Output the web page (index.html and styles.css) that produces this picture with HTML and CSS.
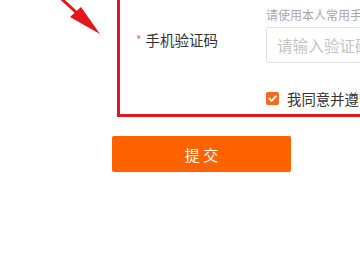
FILE: index.html
```html
<!DOCTYPE html>
<html lang="zh-CN">
<head>
<meta charset="utf-8">
<title>提交</title>
<link rel="stylesheet" href="styles.css">
</head>
<body>
<div class="page">
  <div class="frame">
    <div class="row">
      <div class="label"><span class="req">*</span>手机验证码</div>
      <div class="field">
        <div class="hint">请使用本人常用手机号码</div>
        <div class="input"><span class="placeholder">请输入验证码</span></div>
        <div class="agree">
          <span class="check"><svg viewBox="0 0 13 13" width="13" height="13"><path d="M3.3 6.6 L5.6 8.8 L9.8 4.4" fill="none" stroke="#fff" stroke-width="1.9" stroke-linecap="round" stroke-linejoin="round"/></svg></span>
          <span class="agree-text">我同意并遵守相关协议</span>
        </div>
      </div>
    </div>
  </div>
  <button class="submit" type="button">提 交</button>
  <svg class="arrow" viewBox="0 0 120 50" width="120" height="50">
    <line x1="54" y1="-8" x2="77" y2="13" stroke="#e8141b" stroke-width="3"/>
    <polygon points="100,34 70,17 81,7" fill="#e8141b"/>
  </svg>
</div>
</body>
</html>
```
FILE: styles.css
```css
html, body {
  margin: 0;
  padding: 0;
  background: #fff;
  overflow: hidden;
}
body {
  width: 360px;
  height: 270px;
  font-family: "Noto Sans CJK SC", "Noto Sans", sans-serif;
  color: #333;
}
.page {
  position: relative;
  display: flow-root;
  width: 360px;
  height: 270px;
  overflow: hidden;
}
.frame {
  margin: -20px 0 0 117px;
  width: 420px;
  border: 3px solid #dc1a1f;
  padding: 23px 0 5px 0;
  box-sizing: content-box;
}
.row {
  display: flex;
}
.label {
  width: 130px;
  padding-left: 16px;
  margin-top: 24px;
  font-size: 14.5px;
  line-height: 20px;
  color: #333;
  white-space: nowrap;
}
.req {
  color: #ee6b6b;
  margin-right: 4px;
  font-size: 12px;
  position: relative;
  top: -1px;
}
.field {
  display: flex;
  flex-direction: column;
}
.hint {
  font-size: 12px;
  line-height: 18px;
  color: #a8a8a8;
  white-space: nowrap;
}
.input {
  margin-top: 3px;
  width: 220px;
  height: 34px;
  border: 1px solid #e3e3e3;
  border-radius: 2px;
  display: flex;
  align-items: center;
  padding-left: 10px;
}
.placeholder {
  font-size: 15.6px;
  color: #c4c4c4;
  white-space: nowrap;
}
.agree {
  margin-top: 26px;
  height: 20px;
  display: flex;
  align-items: center;
}
.check {
  width: 13px;
  height: 13px;
  background: #f56a1e;
  border-radius: 2px;
  display: flex;
  margin-top: -2px;
}
.agree-text {
  margin-left: 8px;
  font-size: 14.4px;
  line-height: 20px;
  color: #333;
  white-space: nowrap;
}
.submit {
  display: block;
  margin: 19px 0 0 112px;
  width: 179px;
  height: 36px;
  border: none;
  border-radius: 2px;
  background: #ff6300;
  color: #fff;
  font-family: "Noto Sans CJK SC", "Noto Sans", sans-serif;
  font-size: 15px;
  padding: 0;
  cursor: pointer;
}
.arrow {
  position: absolute;
  left: 0;
  top: 0;
}
```
